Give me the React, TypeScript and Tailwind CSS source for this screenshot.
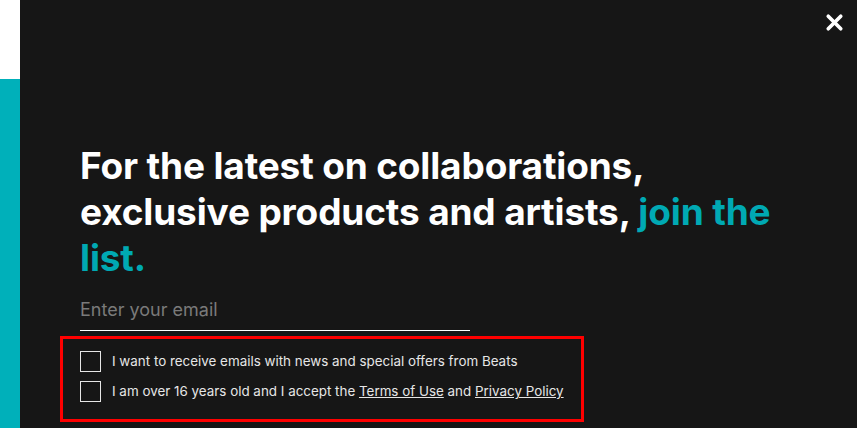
import { X } from 'lucide-react';

export default function App() {
    return (
        <div className="w-[857px] h-[428px] flex overflow-hidden bg-[#161616]" style={{ fontFamily: 'Inter, "Noto Sans", sans-serif' }}>
            {/* Left edge strip */}
            <div className="w-[20px] flex flex-col shrink-0">
                <div className="h-[79px] bg-white" />
                <div className="flex-1 bg-[#00b0ba]" />
            </div>

            {/* Modal body */}
            <div className="flex-1 relative pl-[60px] pt-[143px]">
                <button className="absolute top-[10px] right-[10px] text-white">
                    <X className="w-[25px] h-[25px]" strokeWidth={3.5} />
                </button>

                <h2 className="text-white font-bold text-[37px] leading-[46px] tracking-[-0.15px]">
                    For the latest on collaborations,
                    <br />
                    exclusive products and artists, <span className="text-[#00a9b3]">join the</span>
                    <br />
                    <span className="text-[#00a9b3]">list.</span>
                </h2>

                {/* Email field */}
                <div className="mt-[16px] w-[390px] border-b border-white">
                    <input
                        type="email"
                        placeholder="Enter your email"
                        className="w-full bg-transparent text-[18px] leading-[26px] pb-[7px] text-white placeholder:text-[#7a7a7a] outline-none"
                    />
                </div>

                {/* Consent checkboxes */}
                <div className="mt-[5px] -ml-[20px] w-[524px] h-[86px] border-[3px] border-[#ff0000] pl-[17px] pt-[12px] flex flex-col gap-[9px]">
                    <label className="flex items-center gap-[11px] text-[13.4px] text-[#e6e6e6]">
                        <span className="w-[21px] h-[21px] border border-[#e6e6e6]" />
                        I want to receive emails with news and special offers from Beats
                    </label>
                    <label className="flex items-center gap-[11px] text-[13.4px] text-[#e6e6e6]">
                        <span className="w-[21px] h-[21px] border border-[#e6e6e6]" />
                        <span>
                            I am over 16 years old and I accept the <a className="underline">Terms of Use</a> and{' '}
                            <a className="underline">Privacy Policy</a>
                        </span>
                    </label>
                </div>
            </div>
        </div>
    );
}
